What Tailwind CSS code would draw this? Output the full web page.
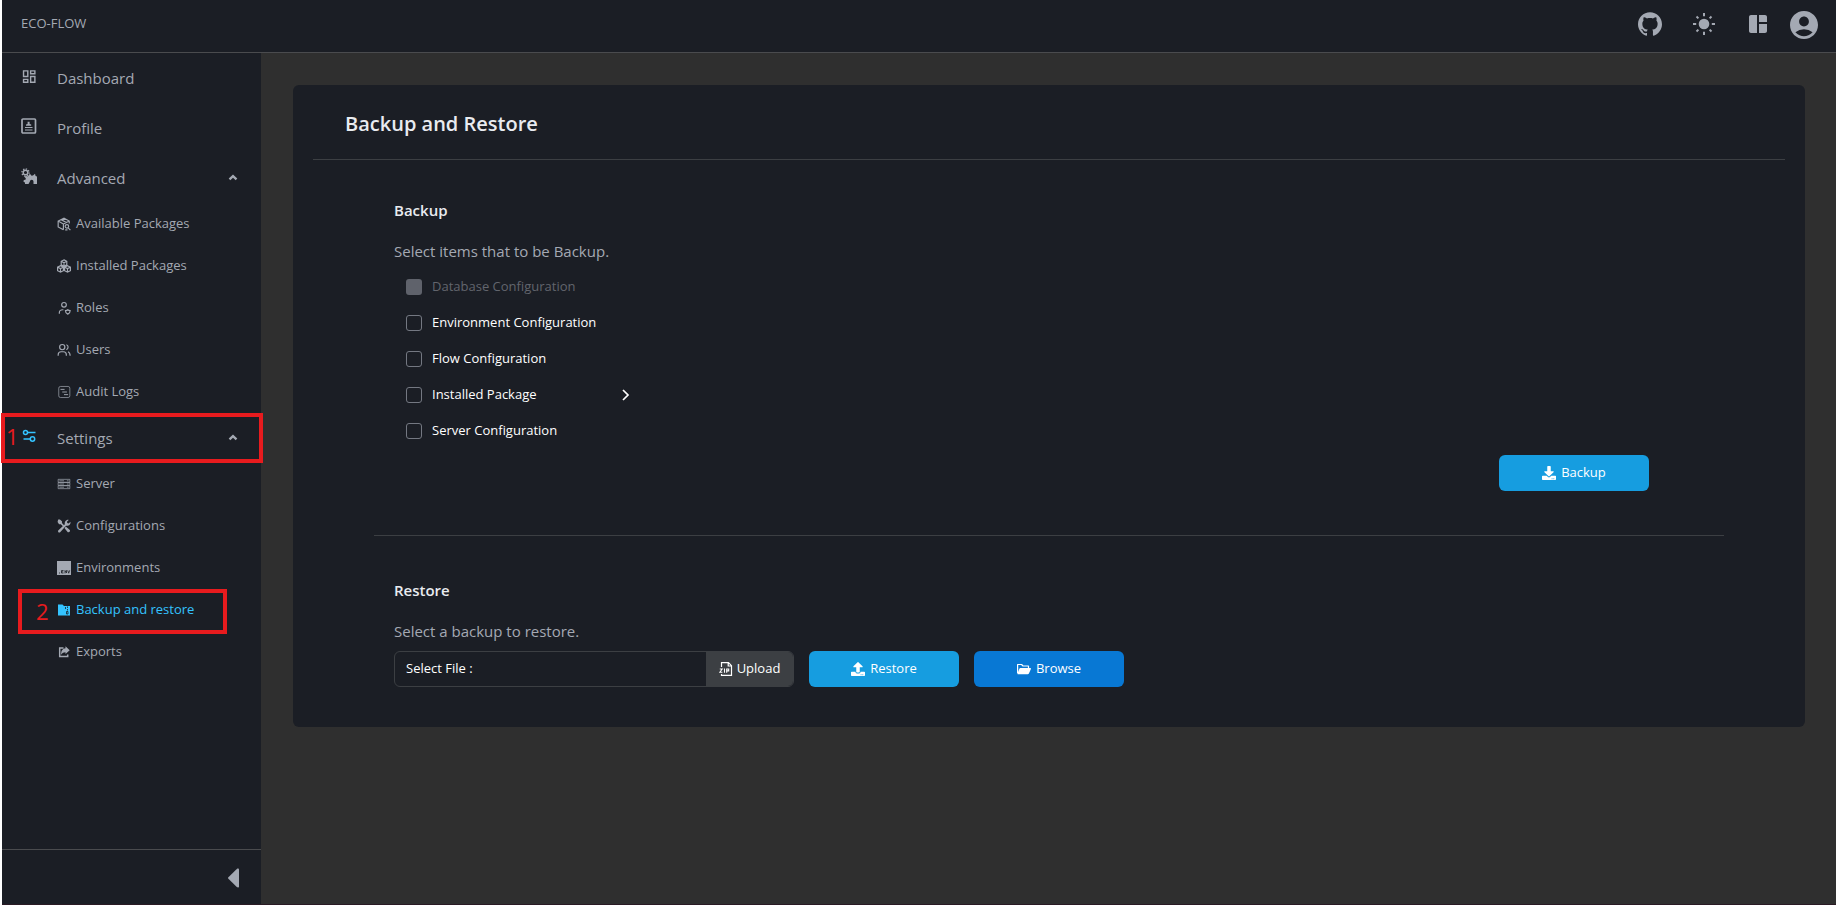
<!DOCTYPE html>
<html lang="en">
<head>
<meta charset="utf-8">
<title>ECO-FLOW</title>
<script src="https://cdn.jsdelivr.net/npm/@tailwindcss/browser@4"></script>
</head>
<body class="bg-white pl-[2px] font-['Open_Sans','Noto_Sans',sans-serif] text-[13px] text-white">
<svg class="hidden">
  <symbol id="up" viewBox="0 0 12 12"><path d="M2.500 8.300L6 5.200l3.500 3.100" fill="none" stroke="currentColor" stroke-width="2.400"/></symbol>
</svg>
<div class="flex h-screen flex-col border-b border-[#2a1a24] bg-[#2f2f2f]">
  <header class="flex h-[53px] shrink-0 items-center justify-between border-b border-[#4a4b4e] bg-[#1b1e25] pr-[18px] pl-[19px] text-[#a4a9b3]">
    <a href="#" class="pb-1">ECO-FLOW</a>
    <div class="flex items-center pb-1">
      <button aria-label="GitHub" class="mr-[30px]"><svg class="size-6" viewBox="0 0 24 24" fill="currentColor"><path d="M12 .297c-6.63 0-12 5.373-12 12 0 5.303 3.438 9.8 8.205 11.385.6.113.82-.258.82-.577 0-.285-.01-1.04-.015-2.04-3.338.724-4.042-1.61-4.042-1.61C4.422 18.07 3.633 17.7 3.633 17.7c-1.087-.744.084-.729.084-.729 1.205.084 1.838 1.236 1.838 1.236 1.07 1.835 2.809 1.305 3.495.998.108-.776.417-1.305.76-1.605-2.665-.3-5.466-1.332-5.466-5.93 0-1.31.465-2.38 1.235-3.22-.135-.303-.54-1.523.105-3.176 0 0 1.005-.322 3.3 1.23.96-.267 1.98-.399 3-.405 1.02.006 2.04.138 3 .405 2.28-1.552 3.285-1.23 3.285-1.23.645 1.653.24 2.873.12 3.176.765.84 1.23 1.91 1.23 3.22 0 4.61-2.805 5.625-5.475 5.92.42.36.81 1.096.81 2.22 0 1.606-.015 2.896-.015 3.286 0 .315.21.69.825.57C20.565 22.092 24 17.592 24 12.297c0-6.627-5.373-12-12-12"/></svg></button>
      <button aria-label="Theme" class="mr-[30px]"><svg class="size-6" viewBox="0 0 24 24" fill="currentColor"><circle cx="12" cy="12" r="5.300"/><path d="M12 1v3.200M12 19.800V23M1 12h3.200M19.800 12H23M4.500 4.500l1.900 1.900M17.600 17.600l1.900 1.900M4.500 19.500l1.900-1.900M17.600 6.400l1.900-1.900" stroke="currentColor" stroke-width="2"/></svg></button>
      <button aria-label="Layout" class="mr-5"><svg class="size-6" viewBox="0 0 24 24" fill="currentColor"><path d="M11 21H5c-1.1 0-2-.9-2-2V5c0-1.1.9-2 2-2h6v18zm2 0h6c1.1 0 2-.9 2-2v-7h-8v9zm8-11V5c0-1.1-.9-2-2-2h-6v7h8z"/></svg></button>
      <button aria-label="Account" class="mt-[2px]"><svg class="size-7" viewBox="2 2 20 20" fill="currentColor"><path d="M12 2C6.48 2 2 6.48 2 12s4.48 10 10 10 10-4.48 10-10S17.52 2 12 2zm0 4c1.93 0 3.5 1.57 3.5 3.5S13.93 13 12 13s-3.5-1.57-3.5-3.5S10.07 6 12 6zm0 14c-2.03 0-4.43-.82-6.14-2.88a9.947 9.947 0 0 1 12.28 0C16.43 19.18 14.03 20 12 20z"/></svg></button>
    </div>
  </header>
  <div class="flex min-h-0 flex-1">
    <aside class="flex w-[259px] shrink-0 flex-col bg-[#1b1e25] text-[#a4a9b3]">
      <nav class="flex-1">
        <a href="#" class="flex h-[50px] items-center pl-[18px] text-[15px]"><svg class="mr-5 mb-1 size-[17px]" viewBox="0 0 24 24" fill="currentColor"><path d="M20 5v2h-4V5h4M10 5v6H6V5h4m10 8v6h-4v-6h4M10 17v2H6v-2h4M22 3h-8v6h8V3zM12 3H4v10h8V3zm10 8h-8v10h8V11zm-10 4H4v6h8v-6z"/></svg>Dashboard</a>
        <a href="#" class="flex h-[50px] items-center pl-[18px] text-[15px]"><svg class="mr-5 mb-1 size-[17px]" viewBox="0 0 17 17" fill="none" stroke="currentColor"><rect x="2" y="1" width="13.5" height="14" rx="1" stroke-width="1.7"/><path d="M5 9.500h7.500M5 12h7.500" stroke-width="1.200"/><path d="M6 7.700V6.500L7.600 6V3.700h2V6l1.600.5v1.200z" fill="currentColor" stroke="none"/></svg>Profile</a>
        <button class="flex h-[50px] w-full items-center pr-[22px] pl-[18px] text-[15px]"><svg class="mr-5 mb-1 size-[17px]" viewBox="0 0 17 17" fill="none" stroke="currentColor"><circle cx="5.500" cy="4.500" r="2.300" stroke-width="1.400"/><circle cx="5.500" cy="4.500" r="3.600" stroke-width="1.300" stroke-dasharray="1.400 1.400"/><path d="M5 16v-1.500l-1.500-.8.300-1.700 1.700-.2.300-1.600L4.500 9l1.300-1.300 1.600.8L8.700 7.500l.3-1.300 1.900.3.500 1.300 1.600-.2L15 5.700l.6 2.200 1.400.5V16h-3.500v-2.500a1.800 1.800 0 0 0-3.600 0L8.500 16z" fill="currentColor" stroke="none"/></svg>Advanced<svg class="mb-[3px] ml-auto size-3"><use href="#up"/></svg></button>
        <a href="#" class="flex h-[42px] items-center pl-[55px]"><svg class="mr-[5px] size-3.5" viewBox="0 0 24 24" fill="none" stroke="currentColor" stroke-width="2"><path d="M11 22l-9-5V7l10-5 9 5v4M2 7l9 5v10M11 12l10-5M7 4.500l9 5M12 2v3"/><circle cx="17" cy="16" r="3"/><path d="M19 18.500l4 4M14 22h4"/></svg>Available Packages</a>
        <a href="#" class="flex h-[42px] items-center pl-[55px]"><svg class="mr-[5px] size-3.5" viewBox="0 0 24 24" fill="none" stroke="currentColor" stroke-width="2"><path d="M12 1.500l4.800 2.500v6L12 12.500 7.200 10V4zM7.200 4l4.800 2.500L16.800 4M12 6.500v6M6 11.500l5 2.500v6l-5 2.500L1 20v-6zM1 14l5 2.500 5-2.500M6 16.500v6M18 11.500l5 2.500v6l-5 2.500-5-2.500v-6zM13 14l5 2.500 5-2.500M18 16.500v6"/></svg>Installed Packages</a>
        <a href="#" class="flex h-[42px] items-center pl-[55px]"><svg class="mr-[5px] size-3.5" viewBox="0 0 24 24" fill="none" stroke="currentColor" stroke-width="2"><circle cx="12" cy="6.500" r="4"/><path d="M4 22v-2c0-3 2-5 6-5h1M18.500 22.500c-2-1-4-2.500-4-6 1.700 0 3-.5 4-1.500 1 1 2.300 1.500 4 1.500 0 3.500-2 5-4 6z"/></svg>Roles</a>
        <a href="#" class="flex h-[42px] items-center pl-[55px]"><svg class="mr-[5px] size-3.5" viewBox="0 0 24 24" fill="none" stroke="currentColor" stroke-width="2"><circle cx="9" cy="7" r="4.500"/><path d="M2 22v-2c0-3 2-5 5-5h4c3 0 5 2 5 5v2M16 3c4 .5 4 7.500 0 8.500M19 15c2.500 1 3.500 3 3.500 7"/></svg>Users</a>
        <a href="#" class="flex h-[42px] items-center pl-[55px]"><svg class="mr-[5px] size-3.5" viewBox="0 0 24 24" fill="none" stroke="currentColor" stroke-width="1.200"><rect x="3" y="2.500" width="19" height="19" rx="3"/><path d="M6 7.500h7M9 12h8M12 16.500h7" stroke-width="1.600"/></svg>Audit Logs</a>
        <div class="relative">
          <button class="flex h-[50px] w-full items-center pr-[22px] pl-[18px] text-[15px]"><svg class="mr-5 mb-1 size-[17px] text-[#34c3ff]" viewBox="0 0 17 17" fill="none" stroke="currentColor" stroke-width="1.500"><circle cx="5.500" cy="4.500" r="2"/><path d="M7.500 4.500h8M3.500 11h7"/><circle cx="12.500" cy="11" r="2.200"/></svg>Settings<svg class="mb-[3px] ml-auto size-3"><use href="#up"/></svg></button>
          <div class="absolute inset-y-0 -right-[2px] -left-px flex items-center border-4 border-[#e81b1e] pb-1 pl-px text-[22px] text-[#e81b1e]">1</div>
        </div>
        <a href="#" class="flex h-[42px] items-center pl-[55px]"><svg class="mr-[5px] size-3.5" viewBox="0 0 24 24" fill="none" stroke="currentColor" stroke-width="1.200"><path d="M2 4h20v5H2zM2 9.500h20v5H2zM2 15h20v5H2zM4 6.500h8M4 12h8M4 17.500h8M17 6.500h3M17 12h3M17 17.500h3"/></svg>Server</a>
        <a href="#" class="flex h-[42px] items-center pl-[55px]"><svg class="mr-[5px] size-3.5" viewBox="0 0 24 24" fill="currentColor"><path d="M2 1h3l3.500 3v3l4 4-2 2-4-4h-3L1 5zM15 13l7 6c1.500 2-1.500 5-3.500 3.500L13 16z"/><path d="M2 19.500L13.500 9C12.500 5 15.500 1 20 1.500l-3 3 .7 2.300 2.300.7 3-3c1 4.500-3 8-7.500 7L5 23c-2 1-4-1.500-3-3.500z"/></svg>Configurations</a>
        <a href="#" class="flex h-[42px] items-center pl-[55px]"><svg class="mr-[5px] size-3.5" viewBox="0 0 14 14"><path fill="currentColor" d="M0 0h14v14H0z"/><path d="M2 12h1M6.500 9.500H4.500v2.500h2M4.500 10.800h1.700M8 12.400V9.500l1.500 2.500V9.200M10.700 9.300l1 2.900 1-2.900" fill="none" stroke="#1b1e25" stroke-width=".8"/></svg>Environments</a>
        <div class="relative">
          <a href="#" class="flex h-[42px] items-center pl-[55px] text-[#34c3ff]"><svg class="mr-[5px] size-3.5" viewBox="0 0 14 14"><path fill="currentColor" d="M1 1.500h4.500L7 3h6V12.500H1z"/><path d="M8.500 4v2M10.500 3.500v1.500M10.500 6v1.500M9.500 8.500h1.500v2.500H9.500z" stroke="#1b1e25" stroke-width=".8" fill="none"/></svg>Backup and restore</a>
          <div class="absolute top-0 -bottom-[3px] left-4 flex w-[209px] items-center border-4 border-[#e81b1e] pl-[14px] text-[22px] text-[#e81b1e]">2</div>
        </div>
        <a href="#" class="flex h-[42px] items-center pl-[55px]"><svg class="mr-[5px] size-3.5" viewBox="0 0 14 14"><path d="M6.500 3H2.700v8.500h8V9.500" fill="none" stroke="currentColor" stroke-width="1.500"/><path fill="currentColor" d="M8.500 1.300l4.200 3.900-4.200 3.900V7.300C6.500 7.300 5.500 8 4.200 9.700 4 6 5.500 3.500 8.500 3.300z"/></svg>Exports</a>
      </nav>
      <button aria-label="Collapse sidebar" class="flex h-[55px] items-center justify-end border-t border-[#4a4b4e] pt-[2px] pr-[22px]"><svg class="h-5 w-[11px]" viewBox="0 0 11 20" fill="currentColor"><path d="M.4 9.300L8.800 1c1-.9 2.200-.5 2.200.6v16.800c0 1.100-1.200 1.500-2.200.6L.4 10.700a1 1 0 0 1 0-1.400z"/></svg></button>
    </aside>
    <main class="min-w-0 flex-1 px-8 pt-8 pr-[31px]">
      <section class="rounded-md bg-[#1b1e25] px-5 pb-10">
        <h1 class="flex h-[75px] items-center border-b border-[#3c3f43] pt-[3px] pl-8 text-xl font-semibold text-[#e9ebf0]">Backup and Restore</h1>
        <div class="px-[61px] text-[#a4a9b3]">
          <div class="border-b border-[#3c3f43] px-5 pt-[38px] pb-11">
            <h2 class="h-6 text-[15px] leading-6 font-semibold text-[#e9ebf0]">Backup</h2>
            <p class="mt-[17px] h-6 text-[15px] leading-6">Select items that to be Backup.</p>
            <div class="mt-[6px] flex w-[238px] flex-col pl-3 text-white">
              <label class="flex h-9 items-center gap-[10px] text-[#62656d]"><input type="checkbox" disabled class="size-4 appearance-none rounded-[3px] bg-[#5f626b]">Database Configuration</label>
              <label class="flex h-9 items-center gap-[10px]"><input type="checkbox" class="size-4 appearance-none rounded-[3px] border border-[#747882]">Environment Configuration</label>
              <label class="flex h-9 items-center gap-[10px]"><input type="checkbox" class="size-4 appearance-none rounded-[3px] border border-[#747882]">Flow Configuration</label>
              <div class="flex h-9 items-center justify-between"><label class="flex items-center gap-[10px]"><input type="checkbox" class="size-4 appearance-none rounded-[3px] border border-[#747882]">Installed Package</label><button aria-label="Expand"><svg class="h-3 w-3" viewBox="0 0 12 12" fill="none" stroke="currentColor" stroke-width="1.700"><path d="M3 1l5 5-5 5"/></svg></button></div>
              <label class="flex h-9 items-center gap-[10px]"><input type="checkbox" class="size-4 appearance-none rounded-[3px] border border-[#747882]">Server Configuration</label>
            </div>
            <div class="mt-[6px] flex justify-end pr-[55px]">
              <button class="flex h-9 w-[150px] items-center justify-center gap-[5px] rounded-md bg-[#169de0] text-white"><svg class="size-3.5" viewBox="0 0 512 512" fill="currentColor"><path d="M216 0h80c13.300 0 24 10.700 24 24v168h87.700c17.800 0 26.700 21.500 14.100 34.100L269.700 378.300c-7.500 7.500-19.800 7.500-27.300 0L90.100 226.100c-12.600-12.600-3.700-34.100 14.100-34.100H192V24c0-13.300 10.700-24 24-24zm296 376v112c0 13.300-10.700 24-24 24H24c-13.300 0-24-10.700-24-24V376c0-13.300 10.700-24 24-24h146.700l49 49c20.100 20.100 52.500 20.100 72.600 0l49-49H488c13.300 0 24 10.700 24 24zm-124 88c0-11-9-20-20-20s-20 9-20 20 9 20 20 20 20-9 20-20zm64 0c0-11-9-20-20-20s-20 9-20 20 9 20 20 20 20-9 20-20z"/></svg>Backup</button>
            </div>
          </div>
          <div class="px-5 pt-[42px]">
            <h2 class="h-6 text-[15px] leading-6 font-semibold text-[#e9ebf0]">Restore</h2>
            <p class="mt-[17px] h-6 text-[15px] leading-6">Select a backup to restore.</p>
            <div class="mt-2 flex text-white">
              <div class="mr-[15px] flex h-9 w-[400px] overflow-hidden rounded-md border border-[#3c3f43]">
                <label for="file" class="flex items-center pl-[11px]">Select File :</label>
                <input id="file" type="text" readonly class="min-w-0 flex-1 bg-transparent px-2 outline-none">
                <button class="flex w-[87px] items-center justify-center gap-1 bg-[#3c3f43]"><svg class="size-3.5" viewBox="0 0 14 14" fill="none" stroke="currentColor"><path d="M2.500 5V.7h7l3 3V13.300H2.500V12M9.200.7V4h3.300" stroke-width="1.200"/><path d="M.8 7h2.400L.8 10.300h2.600M5.500 6.500v4.300M7.700 10.800V7h2v1.900h-2" stroke-width="1.100"/></svg>Upload</button>
              </div>
              <button class="mr-[15px] flex h-9 w-[150px] items-center justify-center gap-[5px] rounded-md bg-[#169de0]"><svg class="size-3.5" viewBox="0 0 512 512" fill="currentColor"><path d="M296 384h-80c-13.300 0-24-10.700-24-24V192h-87.700c-17.800 0-26.700-21.500-14.100-34.100L242.300 5.700c7.500-7.500 19.800-7.500 27.300 0l152.200 152.200c12.600 12.600 3.700 34.100-14.100 34.100H320v168c0 13.300-10.700 24-24 24zm216-8v112c0 13.300-10.700 24-24 24H24c-13.300 0-24-10.700-24-24V376c0-13.300 10.700-24 24-24h136v8c0 30.900 25.100 56 56 56h80c30.900 0 56-25.100 56-56v-8h136c13.300 0 24 10.700 24 24zm-124 88c0-11-9-20-20-20s-20 9-20 20 9 20 20 20 20-9 20-20zm64 0c0-11-9-20-20-20s-20 9-20 20 9 20 20 20 20-9 20-20z"/></svg>Restore</button>
              <button class="flex h-9 w-[150px] items-center justify-center gap-[5px] rounded-md bg-[#0878d4]"><svg class="size-3.5" viewBox="0 0 14 14"><path d="M.6 11V2.500h4L6 4h5.500v2" fill="none" stroke="currentColor" stroke-width="1.200" stroke-linejoin="round"/><path fill="currentColor" d="M3.500 6H13.300c.6 0 .8.400.6.900l-2 4.600c-.3.600-.6.800-1.200.8H.8c-.5 0-.6-.4-.4-.8l2-4.700c.2-.6.500-.8 1.100-.8z"/></svg>Browse</button>
            </div>
          </div>
        </div>
      </section>
    </main>
  </div>
</div>
</body>
</html>
